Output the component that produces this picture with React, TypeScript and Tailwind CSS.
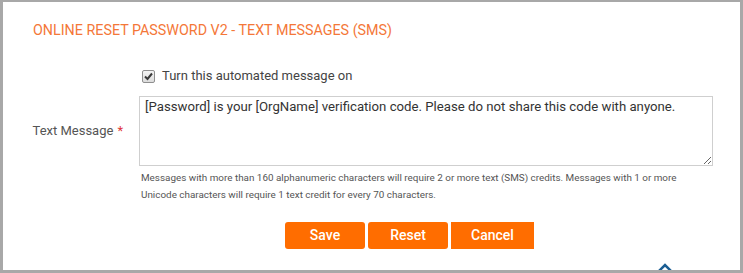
import React from "react";

const App: React.FC = () => {
  return (
    <div className="relative w-[743px] h-[273px] bg-white border-[3px] border-t-2 border-[#a8a8a8] overflow-hidden font-['Roboto',sans-serif]">
      <h2 className="pl-[30px] pt-[19px] text-[14.3px] leading-[18px] text-[#f47738] uppercase">
        Online Reset Password V2 - Text Messages (SMS)
      </h2>

      <div className="mt-[29px] grid grid-cols-[120px_1fr] gap-x-4">
        <div />
        <label className="flex items-center gap-[7px] pl-[3px] h-[16px] text-[13px] text-[#444]">
          <span className="relative w-[13px] h-[13px] shrink-0">
            <input
              type="checkbox"
              defaultChecked
              className="peer appearance-none block w-[13px] h-[13px] m-0 rounded-[2px] border border-[#8f8f8f] bg-gradient-to-b from-[#f4f4f4] to-[#dcdcdc]"
            />
            <svg
              className="pointer-events-none absolute inset-0 w-[13px] h-[13px] hidden peer-checked:block"
              viewBox="0 0 13 13"
              fill="none"
              stroke="#3a3a3a"
              strokeWidth="2"
            >
              <path d="M3 6.5 L5.5 9 L10 3.5" />
            </svg>
          </span>
          Turn this automated message on
        </label>

        <div className="mt-[12px] self-start h-[70px] flex items-center justify-end text-[13px] text-[#555]">
          Text Message <span className="ml-1 text-[#e0363a]">*</span>
        </div>
        <div className="mt-[12px]">
          <textarea
            defaultValue="[Password] is your [OrgName] verification code. Please do not share this code with anyone."
            className="block w-[574px] h-[70px] border border-[#cfcfcf] px-[5px] py-[1px] text-[13.2px] leading-[17px] text-[#333] resize-y outline-none"
          />
          <p className="mt-[3px] pl-[2px] text-[9.9px] leading-[17px] text-[#555]">
            Messages with more than 160 alphanumeric characters will require 2 or more text (SMS) credits. Messages with 1 or more
            <br />
            Unicode characters will require 1 text credit for every 70 characters.
          </p>
        </div>
      </div>

      <div className="mt-[19px] ml-[282px] flex gap-[3px]">
        <button className="w-[80px] h-[27px] rounded-[3px] bg-[#ff6d00] text-white text-[14px] font-medium">Save</button>
        <button className="w-[80px] h-[27px] rounded-[3px] bg-[#ff6d00] text-white text-[14px] font-medium">Reset</button>
        <button className="w-[83px] h-[27px] bg-[#ff6d00] text-white text-[14px] font-medium">Cancel</button>
      </div>

      <svg
        className="absolute left-[653px] bottom-[-3px] w-[18px] h-[10px]"
        viewBox="0 0 18 10"
        fill="none"
        stroke="#1b5e93"
        strokeWidth="2.5"
      >
        <path d="M2 9 L9 2 L16 9" />
      </svg>
    </div>
  );
};

export default App;
